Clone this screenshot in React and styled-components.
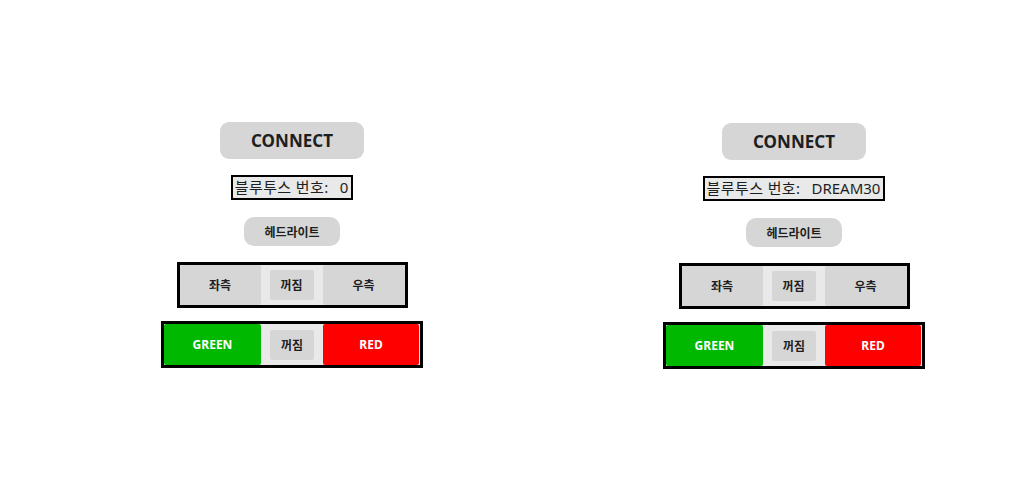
import React from "react";
import styled, { createGlobalStyle } from "styled-components";

const Global = createGlobalStyle`
  html, body { margin: 0; padding: 0; background: #ffffff; }
  body { font-family: "Noto Sans", "Noto Sans CJK KR", sans-serif; color: #1e1e1e; }
  button { font-family: inherit; }
`;

const Page = styled.div`
  display: flex;
  align-items: flex-start;
  gap: 102px;
  padding: 122px 0 0 92px;
  width: 1024px;
  height: 500px;
  box-sizing: border-box;
`;

const Column = styled.div`
  width: 400px;
  display: flex;
  flex-direction: column;
  align-items: center;
  margin-top: ${(p) => p.$shift || 0}px;
`;

const ConnectButton = styled.button`
  width: 144px;
  height: 37px;
  border: none;
  border-radius: 9px;
  background: #d6d6d6;
  color: #1e1e1e;
  font-size: 17px;
  font-weight: 700;
  padding: 0;
  cursor: pointer;
`;

const InfoBox = styled.div`
  margin-top: 16px;
  height: 25px;
  box-sizing: border-box;
  border: 2.5px solid #000;
  background: #e9e9e9;
  display: flex;
  align-items: center;
  padding: 0 3px 0 2px;
  font-family: "Noto Sans", "Noto Sans CJK KR", sans-serif;
  font-size: 15px;
  letter-spacing: 0.4px;
  line-height: 1;
  white-space: nowrap;
`;

const InfoValue = styled.span`
  margin-left: 11px;
  letter-spacing: 0;
`;

const HeadlightButton = styled.button`
  margin-top: 17px;
  width: 96px;
  height: 29px;
  border: none;
  border-radius: 10px;
  background: #d6d6d6;
  color: #1e1e1e;
  font-size: 12px;
  font-weight: 700;
  padding: 0;
`;

const Group = styled.div`
  margin-top: ${(p) => p.$top}px;
  display: flex;
  align-items: center;
  gap: 9px;
  border: 3px solid #000;
  background: #e9e9e9;
  height: ${(p) => p.$height}px;
  padding: 0 ${(p) => p.$padRight || 0}px 0 0;
`;

const SideButton = styled.button`
  width: ${(p) => p.$w}px;
  align-self: stretch;
  border: none;
  border-radius: 2px;
  background: ${(p) => p.$bg || "#d6d6d6"};
  color: ${(p) => p.$fg || "#1e1e1e"};
  font-size: 12px;
  font-weight: 700;
  padding: 0;
`;

const OffButton = styled.button`
  width: 44px;
  height: 30px;
  border: none;
  border-radius: 2px;
  background: #d6d6d6;
  color: #1e1e1e;
  font-size: 12px;
  font-weight: 700;
  padding: 0;
`;

function Panel({ value, shift }) {
  return (
    <Column $shift={shift}>
      <ConnectButton>CONNECT</ConnectButton>
      <InfoBox>
        <span>블루투스 번호:</span>
        <InfoValue>{value}</InfoValue>
      </InfoBox>
      <HeadlightButton>헤드라이트</HeadlightButton>
      <Group $top={16} $height={40}>
        <SideButton $w={81}>좌측</SideButton>
        <OffButton>꺼짐</OffButton>
        <SideButton $w={82}>우측</SideButton>
      </Group>
      <Group $top={13} $height={41} $padRight={1}>
        <SideButton $w={97} $bg="#00b800" $fg="#ffffff">GREEN</SideButton>
        <OffButton>꺼짐</OffButton>
        <SideButton $w={96} $bg="#ff0000" $fg="#ffffff">RED</SideButton>
      </Group>
    </Column>
  );
}

export default function App() {
  return (
    <>
      <Global />
      <Page>
        <Panel value="0" />
        <Panel value="DREAM30" shift={1} />
      </Page>
    </>
  );
}
